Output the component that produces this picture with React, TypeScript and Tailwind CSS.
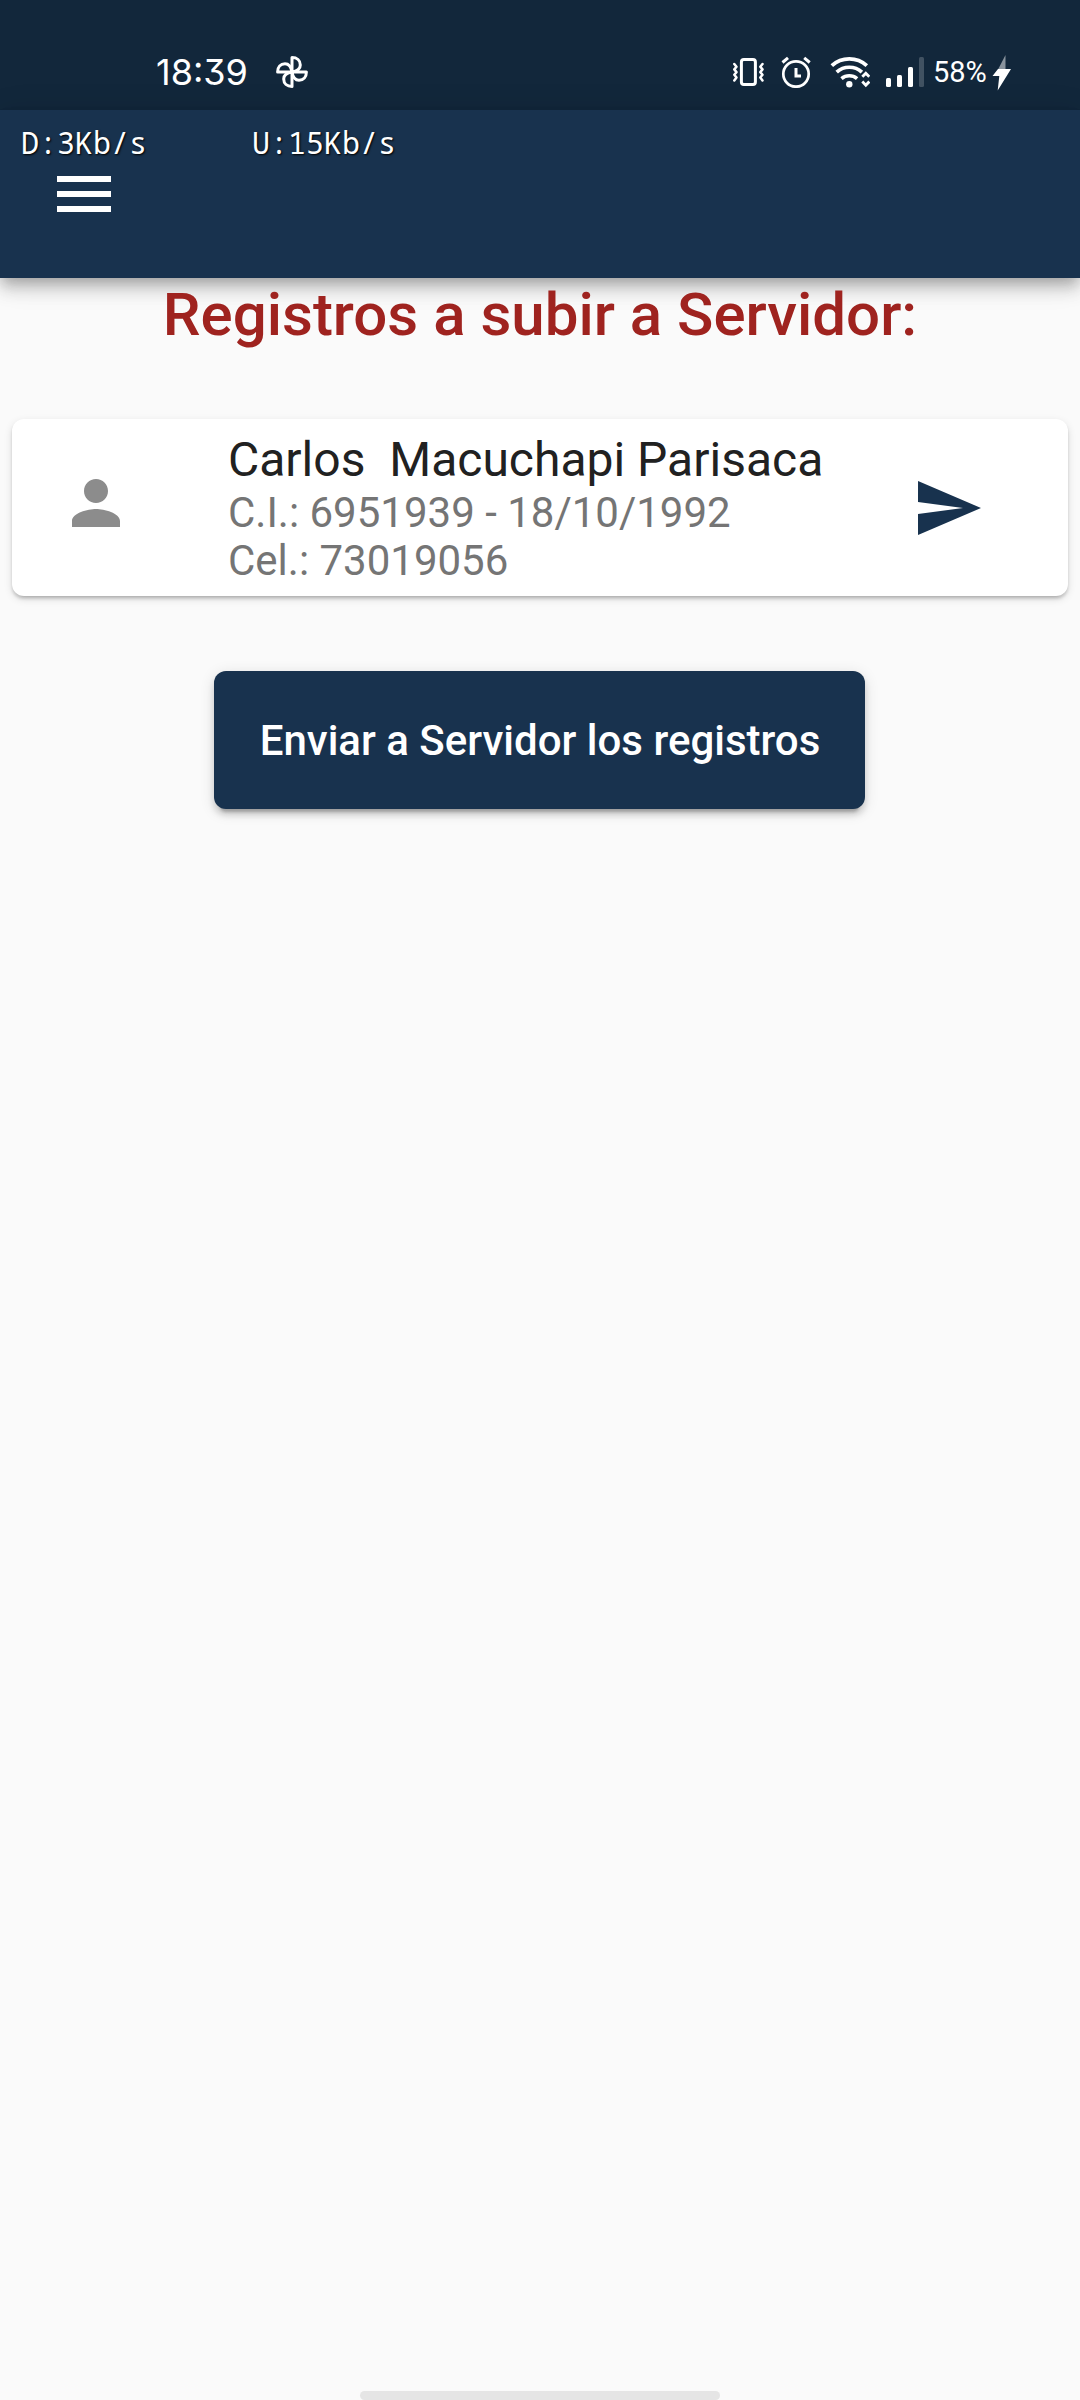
import React from "react";

function PinwheelIcon() {
  const blade = "M16 16V1.600c5 0 8.300 3 8.300 7.400 0 3.500-2.300 6-8.300 7";
  return (
    <svg className="h-8 w-8" viewBox="0 0 32 32" fill="none" stroke="white" strokeWidth="3" strokeLinejoin="round">
      <path d={blade} />
      <path d={blade} transform="rotate(90 16 16)" />
      <path d={blade} transform="rotate(180 16 16)" />
      <path d={blade} transform="rotate(270 16 16)" />
    </svg>
  );
}

function VibrateIcon() {
  return (
    <svg className="h-8 w-8" viewBox="0 0 32 32" fill="none" stroke="white" strokeLinejoin="round" strokeLinecap="round">
      <rect x="9.400" y="3.500" width="14" height="25" rx="2.500" strokeWidth="3" />
      <path d="M2.300 8l2.200 2.700-2.200 2.700 2.200 2.700-2.200 2.700 2.200 2.700L2.300 24.500M30.500 8l-2.200 2.700 2.200 2.700-2.200 2.700 2.200 2.700-2.200 2.700 2.200 3" strokeWidth="2.500" />
    </svg>
  );
}

function AlarmIcon() {
  return (
    <svg className="h-8 w-8" viewBox="0 0 32 32" fill="none" stroke="white">
      <circle cx="16" cy="18" r="12.700" strokeWidth="2.700" />
      <path d="M16 12v8h5" strokeWidth="3" />
      <path d="M2.500 6.500l5.500-4.700M29.700 6.500l-5.500-4.700" strokeWidth="3" />
    </svg>
  );
}

function WifiIcon() {
  return (
    <svg className="h-8 w-10" viewBox="0 0 40 32" fill="none" stroke="white">
      <path d="M1.800 9.700a26 26 0 0 1 35 0" strokeWidth="3.800" />
      <path d="M6.700 16.200a18.500 18.500 0 0 1 25.200 0" strokeWidth="3.700" />
      <path d="M11.500 22.600a12 12 0 0 1 15.600 0" strokeWidth="3.600" />
      <circle cx="19.300" cy="28.200" r="3.200" fill="white" stroke="none" />
      <path d="M32.300 20.800l3.500-3.600 3.500 3.600M32.300 25.600l3.500 3.600 3.500-3.600" strokeWidth="2.800" />
    </svg>
  );
}

function SignalIcon() {
  return (
    <svg className="h-8 w-[38px]" viewBox="0 0 38 32" fill="white">
      <rect x="0" y="22" width="5" height="9" rx="1.500" />
      <rect x="11" y="19" width="5" height="12" rx="1.500" />
      <rect x="22" y="11" width="5" height="20" rx="1.500" />
      <rect x="33" y="1" width="5" height="30" rx="1.500" fillOpacity="0.2" />
    </svg>
  );
}

function BoltIcon() {
  return (
    <svg className="mt-px h-9 w-5" viewBox="0 0 20 36">
      <path d="M13.500 0L6 14.500h7.500z" fill="white" fillOpacity="0.5" />
      <path d="M6 14L0.500 21h6.800L5.700 35.500 19 14z" fill="white" />
    </svg>
  );
}

function StatusBar() {
  return (
    <div className="flex h-[110px] items-center bg-[#12273b] pt-[34px] text-white">
      <span className="ml-[156px] w-[93px] whitespace-nowrap font-['Inter'] text-[36px] leading-none [font-feature-settings:'cv09']">
        18:39
      </span>
      <div className="ml-[27px]">
        <PinwheelIcon />
      </div>
      <div className="ml-[424px]">
        <VibrateIcon />
      </div>
      <div className="ml-4">
        <AlarmIcon />
      </div>
      <div className="ml-[18px]">
        <WifiIcon />
      </div>
      <div className="ml-4">
        <SignalIcon />
      </div>
      <span className="ml-[9px] w-[53px] whitespace-nowrap font-['Roboto'] text-[29px] leading-none">58%</span>
      <div className="ml-[6px]">
        <BoltIcon />
      </div>
    </div>
  );
}

function AppBar() {
  return (
    <header className="relative h-[168px] bg-[#18324e] shadow-[0_6px_12px_-3px_rgba(0,0,0,0.2),0_12px_15px_rgba(0,0,0,0.14),0_3px_30px_rgba(0,0,0,0.12)]">
      <div className="flex pl-[21px] pt-4 font-['Noto_Sans_Mono'] text-[30px] leading-[34px] text-white [text-shadow:1px_1px_2px_black]">
        <span className="w-[231px]">D:3Kb/s</span>
        <span>U:15Kb/s</span>
      </div>
      <button aria-label="Menu" className="ml-[57px] mt-4 flex w-[54px] flex-col gap-[9px]">
        <span className="h-[6px] w-full bg-white" />
        <span className="h-[6px] w-full bg-white" />
        <span className="h-[6px] w-full bg-white" />
      </button>
    </header>
  );
}

function RecordCard() {
  return (
    <article className="mx-3 flex h-[177px] rounded-xl bg-white shadow-[0_6px_3px_-6px_rgba(0,0,0,0.2),0_3px_3px_rgba(0,0,0,0.14),0_3px_9px_rgba(0,0,0,0.12)]">
      <svg className="ml-12 mt-12 size-[72px] shrink-0" viewBox="0 0 24 24" fill="#8c8c8c">
        <path d="M12 12c2.210 0 4-1.790 4-4s-1.790-4-4-4-4 1.790-4 4 1.790 4 4 4zm0 2c-2.670 0-8 1.340-8 4v2h16v-2c0-2.660-5.330-4-8-4z" />
      </svg>
      <div className="ml-24 w-[640px] pt-[13px]">
        <h2 className="whitespace-pre text-[48px] leading-[56px] text-[#212121]">Carlos  Macuchapi Parisaca</h2>
        <p className="pt-px text-[42px] leading-[48px] text-[#757575]">C.I.: 6951939 - 18/10/1992</p>
        <p className="text-[42px] leading-[48px] text-[#757575]">Cel.: 73019056</p>
      </div>
      <svg className="ml-[44px] mt-[53px] size-[72px] shrink-0" viewBox="0 0 24 24" fill="#18324e">
        <path d="M2.010 21L23 12 2.010 3 2 10l15 2-15 2z" />
      </svg>
    </article>
  );
}

export default function App() {
  return (
    <div className="flex h-[2400px] w-[1080px] flex-col overflow-hidden bg-[#fafafa] font-['Roboto',sans-serif]">
      <StatusBar />
      <AppBar />
      <main className="relative flex flex-1 flex-col">
        <h1 className="mt-[2px] text-center text-[60px] font-medium leading-[70px] text-[#9f231f]">Registros a subir a Servidor:</h1>
        <div className="mt-[69px]">
          <RecordCard />
        </div>
        <button className="ml-[214px] mt-[75px] h-[138px] w-[651px] whitespace-nowrap rounded-xl bg-[#18324e] pl-px text-[42px] font-medium text-white shadow-[0_9px_3px_-6px_rgba(0,0,0,0.2),0_6px_6px_rgba(0,0,0,0.14),0_3px_15px_rgba(0,0,0,0.12)]">
          Enviar a Servidor los registros
        </button>
      </main>
      <div className="mx-auto h-[9px] w-[360px] rounded-full bg-[#e5e5e5]" />
    </div>
  );
}
